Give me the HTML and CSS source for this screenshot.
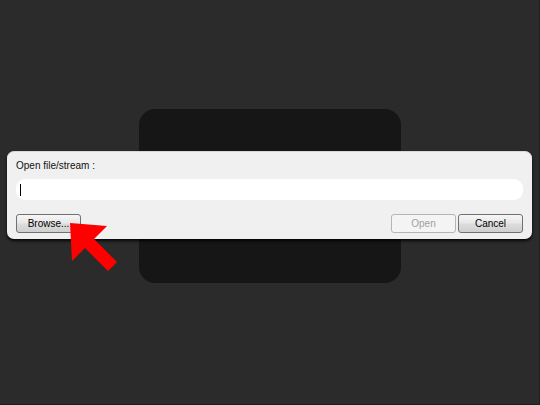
FILE: index.html
```html
<!DOCTYPE html>
<html>
<head>
<meta charset="utf-8">
<link rel="stylesheet" href="styles.css">
</head>
<body>
<div class="stage">
  <div class="panel"></div>
  <div class="dialog">
    <div class="label">Open file/stream :</div>
    <div class="input"><span class="caret"></span></div>
    <div class="actions">
      <button class="btn browse">Browse...</button>
      <div class="spacer"></div>
      <button class="btn disabled">Open</button>
      <button class="btn">Cancel</button>
    </div>
  </div>
  <svg class="arrow" width="540" height="405" viewBox="0 0 540 405">
    <polygon points="70,223 107,226 94,239 117,262 108,271 85,248 72,261" fill="#ff0000"/>
  </svg>
</div>
</body>
</html>
```

FILE: styles.css
```css
html, body {
  margin: 0;
  padding: 0;
  background: #2b2b2b;
}
.stage {
  position: relative;
  width: 540px;
  height: 405px;
  display: grid;
  grid-template-columns: 540px;
  grid-template-rows: 405px;
  background: #2b2b2b;
  box-sizing: border-box;
  border-right: 1px solid #1e1e1e;
  border-bottom: 1px solid #1e1e1e;
  overflow: hidden;
  font-family: "Liberation Sans", Arial, sans-serif;
  font-size: 10px;
  color: #000;
}
.panel {
  grid-area: 1 / 1;
  align-self: start;
  justify-self: start;
  margin-left: 139px;
  margin-top: 109px;
  width: 262px;
  height: 174px;
  border-radius: 16px;
  background: #161616;
}
.dialog {
  grid-area: 1 / 1;
  align-self: start;
  justify-self: start;
  margin-left: 7px;
  margin-top: 151px;
  width: 525px;
  height: 88px;
  box-sizing: border-box;
  border-radius: 7px;
  background: #f0f0f0;
  border-top: 1px solid #d8d8d8;
  box-shadow: 0 2px 3px rgba(0,0,0,0.85);
  padding: 7px 9px 0 9px;
  display: flex;
  flex-direction: column;
}
.label {
  height: 13px;
  line-height: 13px;
  color: #111;
}
.input {
  margin-top: 7px;
  height: 21px;
  background: #fff;
  border-radius: 9px;
  display: flex;
  align-items: center;
  padding-left: 4px;
  margin-right: 0;
}
.caret {
  width: 1px;
  height: 12px;
  background: #000;
}
.actions {
  margin-top: 14px;
  display: flex;
  gap: 2px;
}
.spacer {
  flex: 1;
}
.btn {
  height: 19px;
  width: 65px;
  box-sizing: border-box;
  border: 1px solid #707070;
  border-radius: 3px;
  background: linear-gradient(#f6f6f6 0%, #e8e8e8 45%, #dcdcdc 55%, #cfcfcf 100%);
  font-family: "Liberation Sans", Arial, sans-serif;
  font-size: 10px;
  color: #000;
  padding: 0;
  line-height: 17px;
}
.btn.disabled {
  border-color: #b5b5b5;
  background: #f4f4f4;
  color: #a0a0a0;
}
.arrow {
  position: absolute;
  left: 0;
  top: 0;
}
```
